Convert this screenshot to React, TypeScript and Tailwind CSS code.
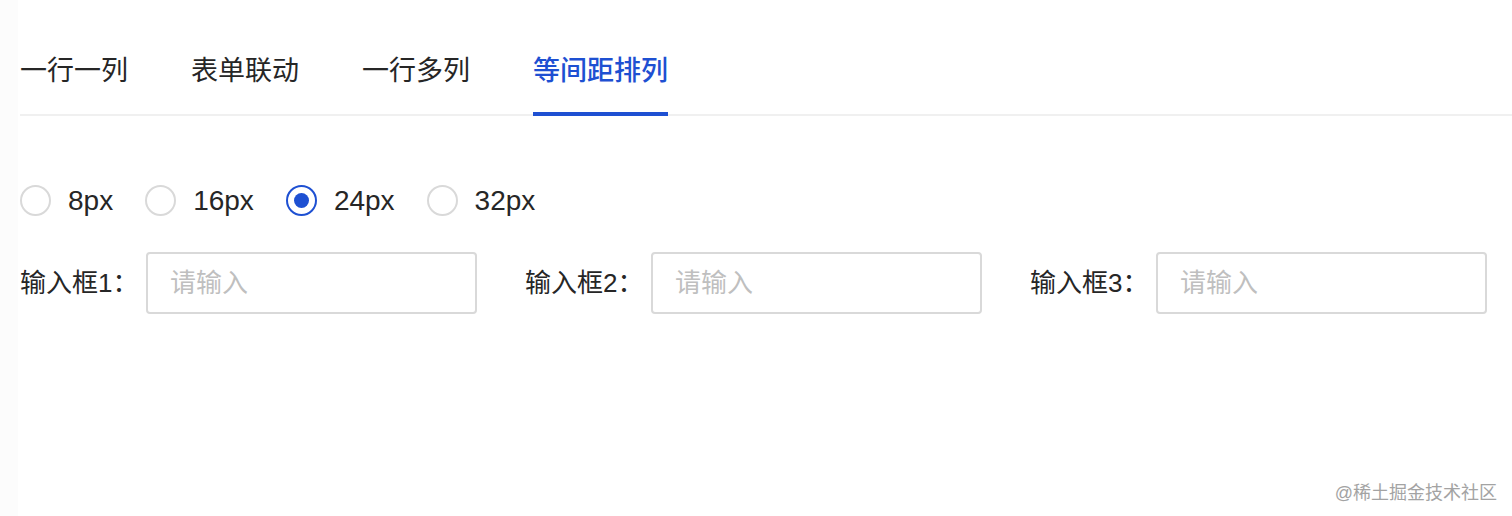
import { useState } from "react";

const tabs = ["一行一列", "表单联动", "一行多列", "等间距排列"];
const gaps = ["8px", "16px", "24px", "32px"];

const font = { fontFamily: '"Liberation Sans", "Noto Sans CJK SC", sans-serif' };

export default function App() {
	const [active, setActive] = useState(3);
	const [gap, setGap] = useState("24px");

	return (
		<div
			className="relative flex h-[516px] w-[1512px] overflow-hidden bg-white text-[#262626]"
			style={font}
		>
			<div className="w-[18px] shrink-0 bg-[#fcfcfc]" />
			<div className="flex flex-1 flex-col pl-[2px]">
				{/* tabs */}
				<div className="mt-[28px] flex h-[88px] gap-[63px] border-b-2 border-[#f0f0f0]">
					{tabs.map((t, i) => (
						<button
							key={t}
							onClick={() => setActive(i)}
							className={`relative flex items-center text-[27px] leading-none ${
								i === active ? "font-medium text-[#1e50d2]" : "text-[#262626]"
							}`}
						>
							{t}
							{i === active && (
								<span className="absolute -bottom-[2px] left-0 right-0 h-[4px] bg-[#1e50d2]" />
							)}
						</button>
					))}
				</div>

				{/* radio group */}
				<div className="mt-[69px] flex items-center">
					{gaps.map((g) => (
						<label
							key={g}
							onClick={() => setGap(g)}
							className="mr-[32px] flex cursor-pointer items-center"
						>
							<span
								className={`flex h-[31px] w-[31px] items-center justify-center rounded-full border-2 bg-white ${
									gap === g ? "border-[#1e50d2]" : "border-[#d9d9d9]"
								}`}
							>
								{gap === g && (
									<span className="h-[15px] w-[15px] rounded-full bg-[#1e50d2]" />
								)}
							</span>
							<span className="ml-[17px] text-[28px] leading-none">{g}</span>
						</label>
					))}
				</div>

				{/* inputs */}
				<div className="mt-[36px] flex gap-[48px]">
					{[1, 2, 3].map((n) => (
						<div key={n} className="flex w-[457px] items-center">
							<span className="w-[126px] shrink-0 text-[26px] leading-none">
								输入框{n}：
							</span>
							<input
								placeholder="请输入"
								className="h-[62px] w-0 min-w-0 flex-1 rounded-[4px] border-2 border-[#d9d9d9] px-[22px] text-[26px] outline-none placeholder:text-[#bfbfbf]"
								style={font}
							/>
						</div>
					))}
				</div>
			</div>

			<span className="absolute bottom-[14px] right-[15px] text-[18px] leading-none text-[#a3a3a3]">
				@稀土掘金技术社区
			</span>
		</div>
	);
}
